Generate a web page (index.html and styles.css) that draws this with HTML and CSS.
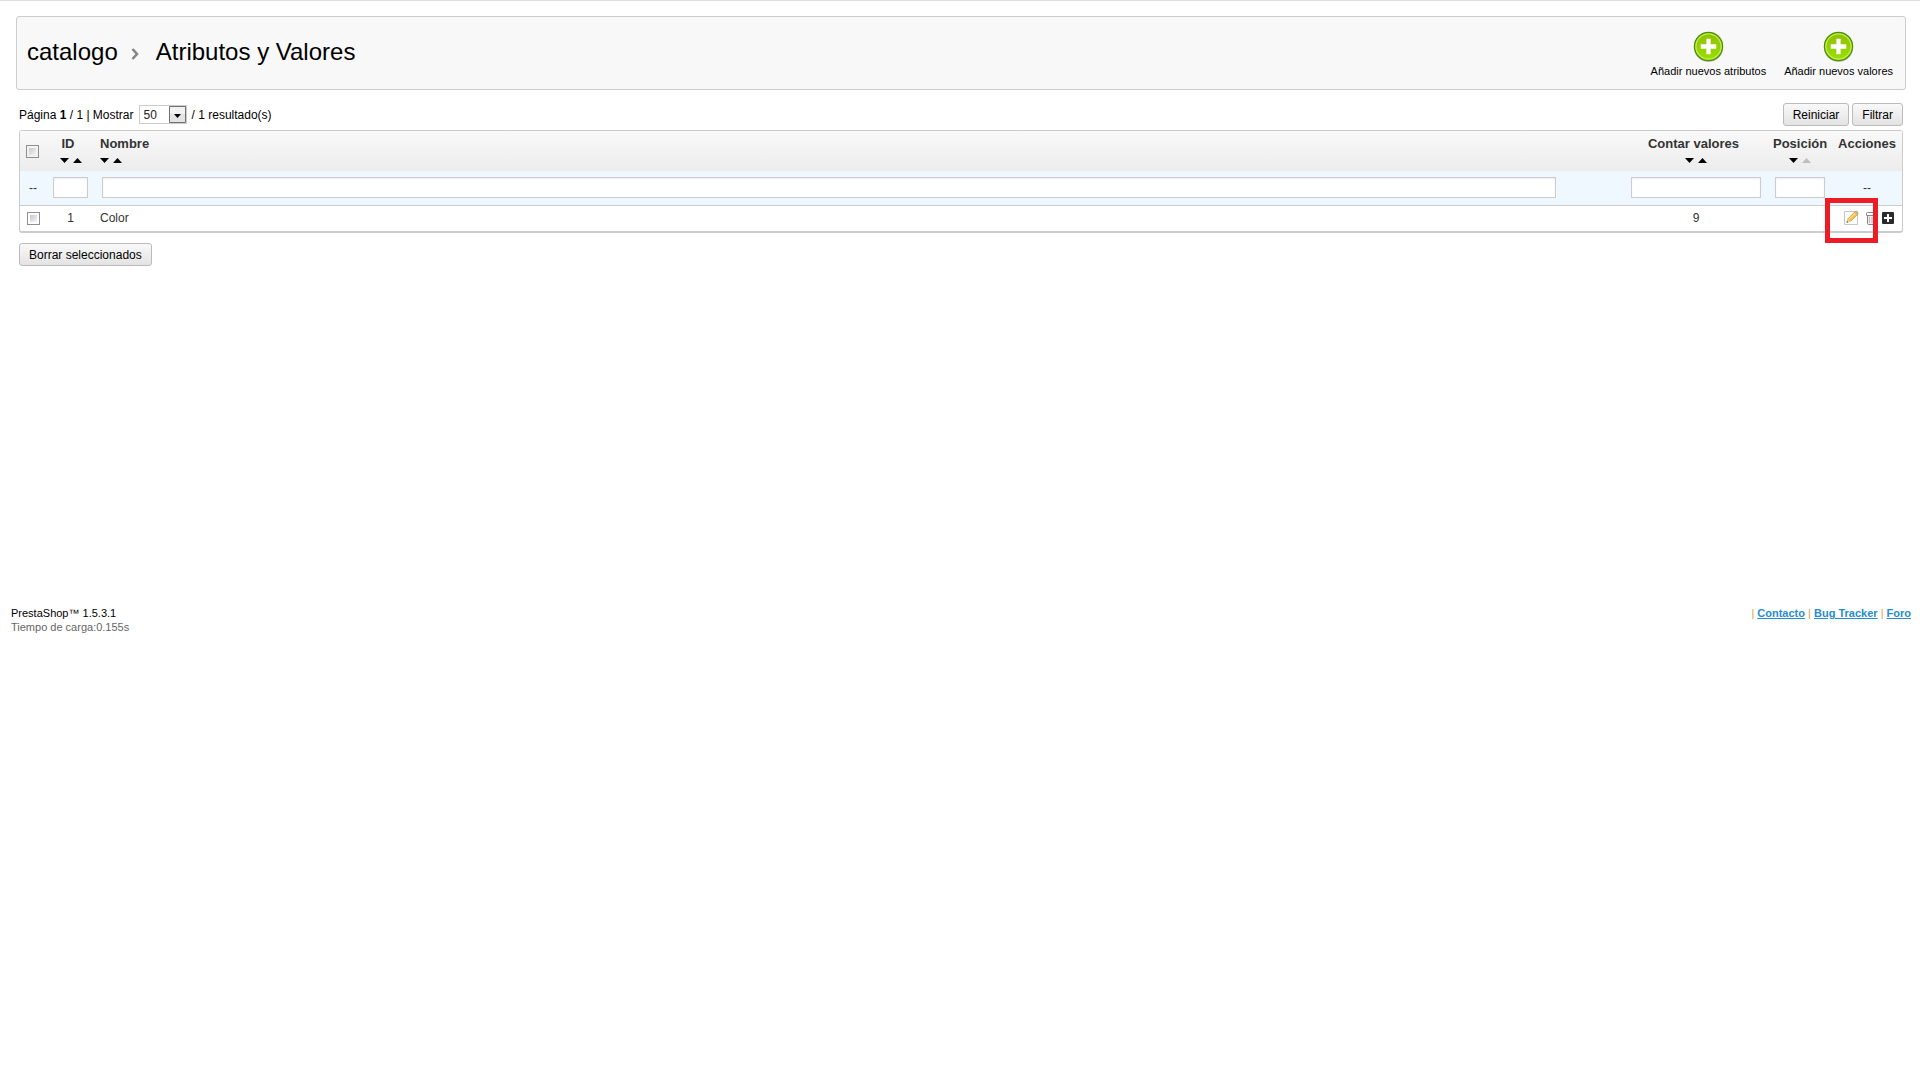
FILE: index.html
```html
<!DOCTYPE html>
<html lang="es">
<head>
    <meta charset="UTF-8">
    <meta name="viewport" content="width=device-width, initial-scale=1.0">
    <title>Atributos y Valores - PrestaShop</title>
    <link rel="stylesheet" href="styles.css">
</head>
<body>
    <svg class="sprite" width="0" height="0" aria-hidden="true">
        <defs>
            <linearGradient id="green" x1="0" y1="0" x2="0" y2="1">
                <stop offset="0" stop-color="#8fbf00"/>
                <stop offset="1" stop-color="#9ae000"/>
            </linearGradient>
            <symbol id="icon-new" viewBox="0 0 32 32">
                <circle cx="16" cy="17" r="15" fill="#000" opacity=".2"/>
                <circle cx="16" cy="16" r="14.5" fill="url(#green)" stroke="#4a9404" stroke-width="1.4"/>
                <circle cx="16" cy="16" r="13" fill="none" stroke="#c6ea5e" stroke-width="1.2"/>
                <path d="M13.8 8h4.4v5.800h5.800v4.400h-5.800v5.800h-4.400v-5.800h-5.800v-4.400h5.800z" fill="#fff"/>
            </symbol>
            <symbol id="icon-down" viewBox="0 0 9 5">
                <path d="M0 0h9L4.500 5z"/>
            </symbol>
            <symbol id="icon-up" viewBox="0 0 9 5">
                <path d="M0 5h9L4.500 0z"/>
            </symbol>
        </defs>
    </svg>

    <main>
        <header class="toolbar">
            <h1>catalogo
                <svg class="separator" width="8" height="12" viewBox="0 0 8 12" aria-hidden="true">
                    <path d="M1.500 1l4.500 5-4.500 5" fill="none" stroke="#858585" stroke-width="2.600"/>
                </svg>
                Atributos y Valores</h1>
            <nav class="toolbar-actions">
                <a href="#"><svg width="31" height="31" aria-hidden="true"><use href="#icon-new"/></svg>Añadir nuevos atributos</a>
                <a href="#"><svg width="31" height="31" aria-hidden="true"><use href="#icon-new"/></svg>Añadir nuevos valores</a>
            </nav>
        </header>

        <form class="list">
            <div class="list-top">
                <div class="pagination">
                    <span>Página <b>1</b> / 1 | <label for="show">Mostrar</label></span>
                    <select id="show">
                        <option>20</option>
                        <option selected>50</option>
                        <option>100</option>
                        <option>300</option>
                    </select>
                    <span>/ 1 resultado(s)</span>
                </div>
                <div class="filter-buttons">
                    <button type="reset" class="button">Reiniciar</button>
                    <button type="button" class="button">Filtrar</button>
                </div>
            </div>

            <div class="table-box">
                <table>
                    <colgroup>
                        <col class="col-check">
                        <col class="col-id">
                        <col>
                        <col class="col-count">
                        <col class="col-position">
                        <col class="col-actions">
                    </colgroup>
                    <thead>
                        <tr class="titles">
                            <th class="check"><input type="checkbox" aria-label="Seleccionar todo"></th>
                            <th class="center number">
                                <span class="title">ID</span>
                                <span class="sort">
                                    <a href="#" aria-label="ID descendente"><svg width="9" height="5"><use href="#icon-down"/></svg></a>
                                    <a href="#" aria-label="ID ascendente"><svg width="9" height="5"><use href="#icon-up"/></svg></a>
                                </span>
                            </th>
                            <th>
                                <span class="title">Nombre</span>
                                <span class="sort">
                                    <a href="#" aria-label="Nombre descendente"><svg width="9" height="5"><use href="#icon-down"/></svg></a>
                                    <a href="#" aria-label="Nombre ascendente"><svg width="9" height="5"><use href="#icon-up"/></svg></a>
                                </span>
                            </th>
                            <th class="center number">
                                <span class="title">Contar valores</span>
                                <span class="sort">
                                    <a href="#" aria-label="Contar valores descendente"><svg width="9" height="5"><use href="#icon-down"/></svg></a>
                                    <a href="#" aria-label="Contar valores ascendente"><svg width="9" height="5"><use href="#icon-up"/></svg></a>
                                </span>
                            </th>
                            <th class="center">
                                <span class="title">Posición</span>
                                <span class="sort">
                                    <a href="#" aria-label="Posición descendente"><svg width="9" height="5"><use href="#icon-down"/></svg></a>
                                    <a href="#" class="current" aria-label="Posición ascendente"><svg width="9" height="5"><use href="#icon-up"/></svg></a>
                                </span>
                            </th>
                            <th class="center"><span class="title">Acciones</span></th>
                        </tr>
                        <tr class="filters">
                            <td class="center">--</td>
                            <td><input type="text" class="filter" aria-label="Filtrar ID"></td>
                            <td><input type="text" class="filter filter-name" aria-label="Filtrar nombre"></td>
                            <td><input type="text" class="filter" aria-label="Filtrar contar valores"></td>
                            <td><input type="text" class="filter" aria-label="Filtrar posición"></td>
                            <td class="center">--</td>
                        </tr>
                    </thead>
                    <tbody>
                        <tr>
                            <td class="check"><input type="checkbox" aria-label="Seleccionar Color"></td>
                            <td class="center">1</td>
                            <td>Color</td>
                            <td class="center">9</td>
                            <td></td>
                            <td>
                                <div class="actions">
                                    <a href="#" aria-label="Modificar">
                                        <svg width="16" height="16" viewBox="0 0 16 16">
                                            <path d="M1.500 1.500h13v13h-13z" fill="#fcfcfc" stroke="#c6c6c6"/>
                                            <path d="M4 12l1.200-3.500 7-7 2.800 2.500-7.200 7z" fill="#f6c64b" stroke="#b98a2c" stroke-width=".7"/>
                                            <path d="M6 9.300l7-7" stroke="#fdeaa0" stroke-width="1"/>
                                            <path d="M11.600 2.200l1.600-1.600 2.600 2.500-1.600 1.600z" fill="#c9ac86"/>
                                            <path d="M3.600 12.600l1.500-3.800 2.500 2.400z" fill="#ecd3ab"/>
                                            <path d="M3.400 12.800l.6-1.800 1.200 1.200z" fill="#444"/>
                                        </svg>
                                    </a>
                                    <a href="#" aria-label="Borrar">
                                        <svg width="12" height="16" viewBox="0 0 12 16">
                                            <path d="M1.500 5.500h9v8q0 1-1 1h-7q-1 0-1-1z" fill="#eee" stroke="#888"/>
                                            <path d="M.5 5.500v-2q0-1 1-1h9q1 0 1 1v2z" fill="#fff" stroke="#888"/>
                                            <path d="M3.500 7v6M6 7v6M8.500 7v6" stroke="#bbb"/>
                                        </svg>
                                    </a>
                                    <a href="#" aria-label="Ver">
                                        <svg width="12" height="12" viewBox="0 0 12 12">
                                            <rect width="12" height="12" rx="1" fill="#2b2b2b"/>
                                            <path d="M6 2v8M2 6h8" stroke="#fff" stroke-width="2"/>
                                        </svg>
                                    </a>
                                    <span class="highlight"></span>
                                </div>
                            </td>
                        </tr>
                    </tbody>
                </table>
            </div>

            <button type="button" class="button">Borrar seleccionados</button>
        </form>
    </main>

    <footer>
        <div>
            <div class="version">PrestaShop™ 1.5.3.1</div>
            <div>Tiempo de carga:0.155s</div>
        </div>
        <nav>
            <i>|</i> <a href="#">Contacto</a> <i>|</i> <a href="#">Bug Tracker</a> <i>|</i> <a href="#">Foro</a>
        </nav>
    </footer>
</body>
</html>
```

FILE: styles.css
```css
* {
    box-sizing: border-box;
}
body {
    font-family: Arial, "Liberation Sans", sans-serif;
    font-size: 12px;
    line-height: 14px;
    color: #000;
    background-color: #fff;
    margin: 0;
    border-top: 1px solid #dfdfdf;
}
svg {
    display: block;
}
.sprite {
    position: absolute;
}
main {
    min-height: 605px;
    padding: 15px 14px 0 16px;
}

/* Toolbar */
.toolbar {
    display: flex;
    justify-content: space-between;
    min-height: 74px;
    padding: 14px 12px 10px 10px;
    background-color: #f8f8f8;
    border: 1px solid #ccc;
    border-radius: 3px;
}
h1 {
    display: flex;
    align-items: center;
    gap: 13px;
    margin: 0;
    font-size: 24px;
    line-height: 28px;
    font-weight: normal;
    align-self: flex-start;
    padding-top: 7px;
}
.separator {
    margin: 3px 4px 0 0;
}
.toolbar-actions {
    display: flex;
    gap: 18px;
}
.toolbar-actions a {
    display: flex;
    flex-direction: column;
    align-items: center;
    gap: 2px;
    font-size: 11px;
    color: #000;
    text-decoration: none;
}

/* List */
.list {
    padding: 13px 3px 0;
}
.list-top {
    display: flex;
    justify-content: space-between;
    align-items: center;
    margin-bottom: 4px;
}
.pagination {
    display: flex;
    align-items: center;
    gap: 5px;
}
select {
    appearance: none;
    width: 48px;
    height: 19px;
    padding: 0 0 0 4px;
    border: 1px solid #ccc;
    border-radius: 0;
    font: inherit;
    color: #222;
    background: url("data:image/svg+xml,%3Csvg xmlns='http://www.w3.org/2000/svg' width='17' height='17'%3E%3Cpath d='M.5.5h16v16H.5z' fill='%23e4e4e4' stroke='%23707070'/%3E%3Cpath d='M1 1h15v7H1z' fill='%23f2f2f2'/%3E%3Cpath d='M5 8h7l-3.500 4z'/%3E%3C/svg%3E") right center no-repeat #fff;
}
.filter-buttons {
    display: flex;
    gap: 3px;
}
.button {
    height: 23px;
    padding: 0 9px;
    font: inherit;
    color: #000;
    background: linear-gradient(#f9f9f9, #e3e3e3);
    border: 1px solid #bbb;
    border-radius: 3px;
}
.table-box {
    border: 1px solid #ccc;
    border-bottom-width: 2px;
    border-radius: 3px;
    margin-bottom: 10px;
}
table {
    width: 100%;
    table-layout: fixed;
    border-collapse: collapse;
    color: #333;
}
.col-check {
    width: 26px;
}
.col-id {
    width: 49px;
}
.col-count {
    width: 144px;
}
.col-position {
    width: 64px;
}
.col-actions {
    width: 70px;
}
th, td {
    padding: 0 5px;
    text-align: left;
}
.center {
    text-align: center;
}
.titles {
    height: 40px;
    background: linear-gradient(#f9f9f9, #ececec);
}
th {
    padding-top: 5px;
    vertical-align: top;
    font-size: 13px;
    line-height: 16px;
    white-space: nowrap;
}
.title {
    display: block;
}
.number .title {
    padding-right: 5px;
}
.sort {
    display: inline-flex;
    gap: 4px;
    padding-top: 6px;
    vertical-align: top;
}
.sort .current {
    opacity: .2;
}
.check {
    padding: 0 0 0 7px;
    vertical-align: middle;
}
.titles .check {
    padding-left: 6px;
}
input[type="checkbox"] {
    appearance: none;
    display: block;
    width: 13px;
    height: 13px;
    margin: 0;
    border: 1px solid #8e8f8f;
    background: linear-gradient(135deg, #c4c8ce, #f6f6f6) content-box #fff;
    padding: 2px;
}
.filters {
    height: 34px;
    background-color: #f0f8ff;
    border-bottom: 1px solid #ccc;
}
.filters td {
    padding: 0 7px;
}
.filter {
    display: block;
    width: 100%;
    height: 21px;
    border: 1px solid #ccc;
    background-color: #fff;
    box-shadow: inset 0 1px 2px #eee;
    font: inherit;
}
.filter-name {
    width: 96%;
}
tbody tr {
    height: 26px;
}
.actions {
    position: relative;
    display: flex;
    align-items: center;
    justify-content: flex-end;
    gap: 4px;
    padding-right: 3px;
}
.actions a:first-child {
    margin-right: 3px;
}

/* Red frame over the edit action */
.highlight {
    position: absolute;
    top: -12px;
    right: 19px;
    width: 53px;
    height: 45px;
    border: 5px solid #ed1c24;
}

/* Footer */
footer {
    display: flex;
    justify-content: space-between;
    padding: 0 9px 0 11px;
    font-size: 11px;
    color: #666;
}
.version {
    color: #000;
}
footer a {
    color: #268ccd;
    font-weight: bold;
}
footer i {
    font-style: normal;
    color: #e29a4e;
}
```
